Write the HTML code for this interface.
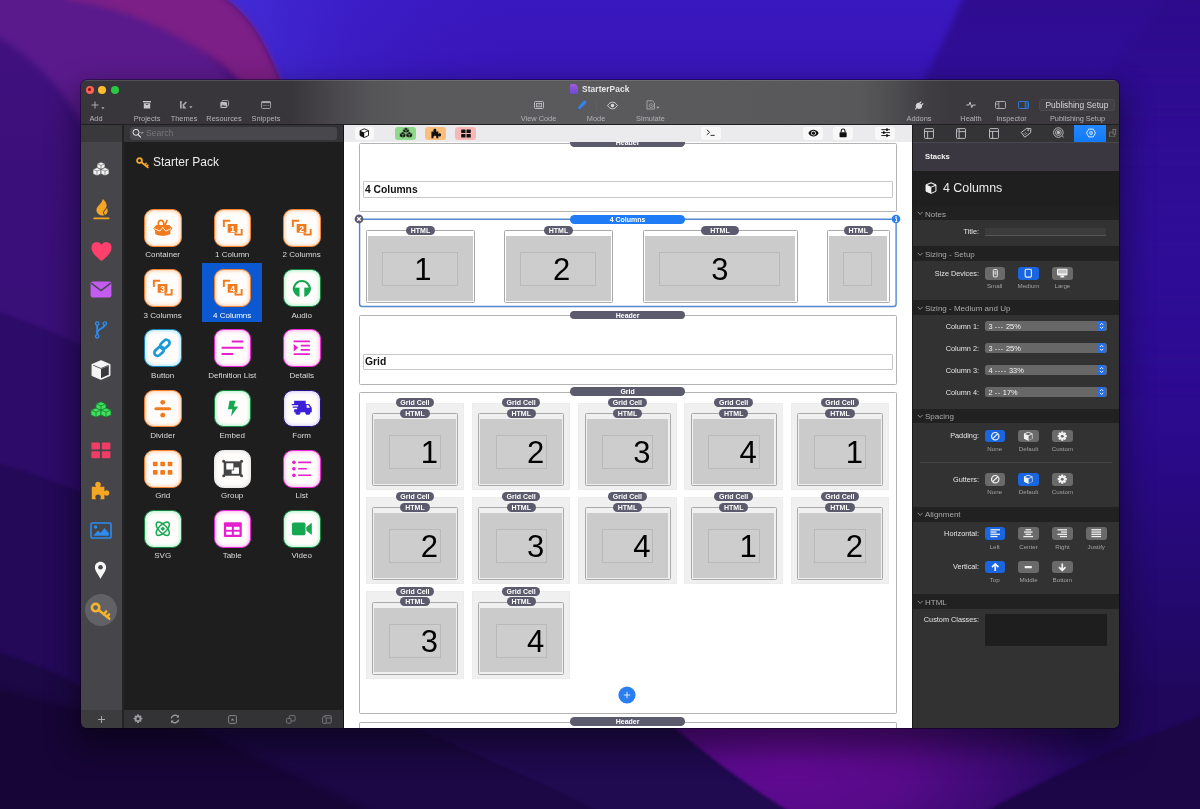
<!DOCTYPE html>
<html lang="en">
<head>
<meta charset="utf-8">
<title>StarterPack</title>
<style>
*{box-sizing:border-box;margin:0;padding:0}
html,body{width:1200px;height:809px;overflow:hidden;background:#2a0a80;font-family:"Liberation Sans",sans-serif;}
#bg{position:absolute;left:0;top:0;width:1200px;height:809px;overflow:hidden}
#shadow{position:absolute;left:81px;top:80px;width:1038px;height:648px;border-radius:6px;box-shadow:0 14px 30px 6px rgba(0,0,0,.42),0 0 0 1px rgba(10,0,30,.45)}
#win{position:absolute;left:81px;top:80px;width:1038px;height:648px;border-radius:6px;overflow:hidden;background:#2d2d2d}
#w{position:absolute;left:-81px;top:-80px;width:1200px;height:809px;will-change:transform}
#w div,#w span,#w svg{position:absolute}
#tb{left:81px;top:80px;width:1038px;height:44px;background:linear-gradient(90deg,#38363a 0px,#38363a 210px,#48464a 250px,#555457 290px,#5a595c 330px,#5a595c 640px,#58575a 780px,#4c4b4e 815px,#403e42 845px,#3b393d 870px,#3b393d 1038px);box-shadow:inset 0 1px 0 rgba(255,255,255,.13)}
#tbline{left:81px;top:124px;width:1038px;height:1px;background:#1f1e21}
.tl{top:85.500px;width:8.100px;height:8.100px;border-radius:50%}
.tlab{top:114px;font-size:7.4px;line-height:9px;color:#b4b3b7;white-space:nowrap;transform:translateX(-50%)}
.ttl{left:582px;top:84px;font-size:8.350px;line-height:11px;font-weight:bold;color:#e6e5e8;letter-spacing:.1px;white-space:nowrap}
</style>
</head>
<body>
<div id="bg">
<svg width="1200" height="809" viewBox="0 0 1200 809">
<defs>
<linearGradient id="gbase" x1="0" y1="0" x2="0" y2="1"><stop offset="0" stop-color="#3a18c0"/><stop offset=".12" stop-color="#3714b4"/><stop offset=".3" stop-color="#3210a2"/><stop offset=".55" stop-color="#2b0a8a"/><stop offset=".78" stop-color="#220868"/><stop offset="1" stop-color="#1c0648"/></linearGradient>
<linearGradient id="gedge" x1="225" y1="0" x2="520" y2="0" gradientUnits="userSpaceOnUse"><stop offset="0" stop-color="#4634de" stop-opacity=".75"/><stop offset=".4" stop-color="#4028d4" stop-opacity=".4"/><stop offset="1" stop-color="#3a18c0" stop-opacity="0"/></linearGradient>
<linearGradient id="gleft" x1="0" y1="0" x2="0" y2="1"><stop offset="0" stop-color="#431280"/><stop offset=".2" stop-color="#3b0f7a"/><stop offset=".4" stop-color="#390f78"/><stop offset="1" stop-color="#2a0b60"/></linearGradient>
<radialGradient id="gglow" cx="790" cy="765" r="300" gradientUnits="userSpaceOnUse" gradientTransform="translate(790 765) scale(1 .5) translate(-790 -765)"><stop offset="0" stop-color="#610a92"/><stop offset=".4" stop-color="#560a88"/><stop offset=".72" stop-color="#3a0a72"/><stop offset="1" stop-color="#20075c"/></radialGradient>
<linearGradient id="gright" x1="0" y1="0" x2="0" y2="400" gradientUnits="userSpaceOnUse"><stop offset="0" stop-color="#2c0a84" stop-opacity=".8"/><stop offset="1" stop-color="#2c0a88" stop-opacity="0"/></linearGradient>
<filter id="b6" color-interpolation-filters="sRGB" x="-20%" y="-20%" width="140%" height="140%"><feGaussianBlur stdDeviation="3"/></filter>
<filter id="b2" color-interpolation-filters="sRGB" x="-20%" y="-20%" width="140%" height="140%"><feGaussianBlur stdDeviation="1.500"/></filter>
<filter id="b20" color-interpolation-filters="sRGB" x="-20%" y="-20%" width="140%" height="140%"><feGaussianBlur stdDeviation="14"/></filter>
</defs>
<rect width="1200" height="809" fill="url(#gbase)"/>
<rect x="220" y="0" width="320" height="200" fill="url(#gedge)"/>
<!-- right darker facets -->
<path d="M975 -40 L962 0 C945 40 930 70 905 110 L900 400 L1260 400 L1260 -40 Z" fill="url(#gright)" filter="url(#b6)"/>
<path d="M1195 -40 L1165 0 C1130 40 1105 75 1085 120 L1080 400 L1260 400 L1260 -40 Z" fill="url(#gright)" opacity=".5" filter="url(#b6)"/>


<!-- left dark purple field -->
<path d="M0 0 L227 0 C255 20 268 50 281 82 L340 250 L690 728 L800 815 L0 815 Z" fill="url(#gleft)"/>
<!-- medium purple -->
<path d="M-40 -40 L60 -40 L120 0 C180 20 230 50 300 200 L110 200 C95 130 60 75 0 38 L-40 15 Z" fill="#5a1a8c" filter="url(#b6)"/>
<!-- magenta band -->
<path d="M-20 -40 L185 -40 L227 0 C255 20 268 50 281 82 L330 200 L300 200 C290 140 250 80 200 50 C160 25 120 8 70 0 Z" fill="#7c1f86" filter="url(#b6)"/>
<!-- left facets -->
<path d="M-20 307 L0 313 C30 322 60 335 95 352 L300 520 L300 840 L-20 840 Z" fill="#2d0b68" filter="url(#b2)"/>
<path d="M-20 459 L0 464 C30 472 60 484 95 498 L400 640 L400 840 L-20 840 Z" fill="#230958" filter="url(#b2)"/>
<path d="M-20 647 L0 653 C30 662 55 673 85 688 C120 705 160 718 193 727 L420 727 L670 840 L-20 840 Z" fill="#1b0844" filter="url(#b2)"/>
<path d="M-20 685 L0 690 C60 705 130 720 193 727 C260 760 320 785 373 815 L420 840 L-20 840 Z" fill="#160536" filter="url(#b6)"/>
<path d="M413 727 L680 727 C715 765 760 790 800 815 L840 840 L660 840 L605 815 C540 780 470 750 413 727 Z" fill="#200a50" filter="url(#b2)"/>
<!-- bottom purple glow -->
<path d="M660 715 C700 750 745 785 795 815 L840 840 L960 840 L1000 815 C1060 780 1130 745 1200 718 L1200 690 L1119 690 L1119 700 Z" fill="url(#gglow)" filter="url(#b2)"/>
<path d="M1230 706 L1200 716 C1130 742 1050 775 985 812 L940 840 L1230 840 Z" fill="#1d0648" filter="url(#b2)"/>
</svg>

</div>
<div id="shadow"></div>
<div id="win"><div id="w">
<div id="tb"></div>
<div id="tbline"></div>
<div class="tl" style="left:85.700px;background:#fe5f57"><div style="left:2.800px;top:2.800px;width:2.500px;height:2.500px;border-radius:50%;background:#8c1a10"></div></div>
<div class="tl" style="left:98px;background:#febc2e"></div>
<div class="tl" style="left:111px;background:#28c840"></div>
<!-- title -->
<svg style="left:570px;top:84px" width="8" height="10" viewBox="0 0 8 10"><defs><linearGradient id="gdoc" x1="0" y1="0" x2="0" y2="1"><stop offset="0" stop-color="#a05ad8"/><stop offset="1" stop-color="#6a4ad0"/></linearGradient></defs><path d="M1 0h4.5L8 2.5V9a1 1 0 0 1-1 1H1a1 1 0 0 1-1-1V1a1 1 0 0 1 1-1z" fill="url(#gdoc)"/></svg>
<div class="ttl">StarterPack</div>
<!-- left group -->
<svg style="left:91px;top:101px" width="16" height="10" viewBox="0 0 16 10"><path d="M4 .5v7M.5 4h7" stroke="#aaa9ad" stroke-width="1" fill="none"/><path d="M10.3 6.200h3.200l-1.600 2.100z" fill="#b4b3b7"/></svg>
<div class="tlab" style="left:96px">Add</div>
<svg style="left:143px;top:101px" width="8" height="8" viewBox="0 0 8 8"><rect x="0" y="0" width="8" height="1.4" fill="#c9c8cc"/><path d="M.8 2.2h6.4V7.4H.8z M2.8 3.2v.8h2.4v-.8z" fill="#c9c8cc" fill-rule="evenodd"/></svg>
<div class="tlab" style="left:147px">Projects</div>
<svg style="left:180px;top:101px" width="13" height="8" viewBox="0 0 13 8"><path d="M0 0h1.7v7.4H0z M2.6 7.4V3.6L5.8.4 6.9 1.5 4 4.6 6.6 7.4z" fill="#a9a8ac"/><path d="M9.300 5.200h3.200l-1.600 2.100z" fill="#b4b3b7"/></svg>
<div class="tlab" style="left:184px">Themes</div>
<svg style="left:220px;top:100px" width="9" height="9" viewBox="0 0 9 9"><rect x="2" y=".5" width="6.5" height="5.5" rx="1" fill="none" stroke="#a9a8ac" stroke-width=".9"/><rect x=".3" y="2" width="6.7" height="6" rx="1" fill="#bdbcc0"/><path d="M1 7l1.8-2.4 1.3 1.5 1-1L6.4 7z" fill="#4a494d"/></svg>
<div class="tlab" style="left:224px">Resources</div>
<svg style="left:261px;top:101px" width="10" height="8" viewBox="0 0 10 8"><rect x=".5" y=".5" width="9" height="7" rx="1" fill="none" stroke="#a9a8ac" stroke-width=".9"/><rect x=".5" y=".5" width="9" height="1.6" fill="#a9a8ac"/><path d="M2 4.4h3.5M6.3 4.4h1.6" stroke="#8a898d" stroke-width=".8"/></svg>
<div class="tlab" style="left:266px">Snippets</div>
<!-- centre group -->
<svg style="left:534px;top:101px" width="10" height="8" viewBox="0 0 10 8"><rect x=".5" y=".5" width="9" height="7" rx="1" fill="none" stroke="#c4c3c7" stroke-width=".9"/><rect x="2.4" y="2.4" width="5.2" height="3.4" fill="none" stroke="#c4c3c7" stroke-width=".8"/><path d="M4.6 3.3l-.8.8.8.8M5.4 3.3l.8.8-.8.8" stroke="#c4c3c7" stroke-width=".5" fill="none"/></svg>
<div class="tlab" style="left:538.5px">View Code</div>
<svg style="left:576px;top:100px" width="11" height="11" viewBox="0 0 11 11"><path d="M7.6 1.1a1.5 1.5 0 0 1 2.2 2.2L4.4 8.7 1.6 9.6l.9-2.8z" fill="#2f86f6"/><path d="M1.2 10l.7-2 1.3 1.3z" fill="#1d4f96"/></svg>
<div style="left:596px;top:100px;width:1px;height:11px;background:#605f63"></div>
<svg style="left:607px;top:101px" width="11" height="9" viewBox="0 0 11 9"><path d="M.6 4.5C2 2.3 3.6 1.2 5.5 1.2s3.500 1.100 4.900 3.300C9 6.700 7.400 7.800 5.500 7.800S2 6.700.600 4.500z" fill="none" stroke="#dcdbdf" stroke-width=".9"/><circle cx="5.500" cy="4.500" r="1.700" fill="#dcdbdf"/></svg>
<div class="tlab" style="left:596px">Mode</div>
<svg style="left:646px;top:100px" width="14" height="10" viewBox="0 0 14 10"><path d="M1 .8h5.200L8.500 3v6H1z" fill="none" stroke="#aaa9ad" stroke-width=".9"/><circle cx="5.300" cy="5.600" r="2" fill="none" stroke="#aaa9ad" stroke-width=".8"/><circle cx="5.300" cy="5.600" r=".7" fill="#aaa9ad"/><path d="M10.300 6.700h3.200l-1.600 2.100z" fill="#b4b3b7"/></svg>
<div class="tlab" style="left:650.5px">Simulate</div>
<!-- right group -->
<svg style="left:914px;top:101px" width="10" height="9" viewBox="0 0 10 9"><path d="M5.200 1.800L7 .2l.7.700-1.500 1.700 1 1 1.700-1.500.7.700-1.600 1.800c.300 1.300-.200 2.300-1.200 2.900-1.200.700-2.700.500-3.700-.200L1.500 8.800.8 8.100l1.400-1.500C1.500 5.500 1.500 4 2.300 2.900c.700-.900 1.800-1.300 2.900-1.100z" fill="#d4d3d7"/></svg>
<div class="tlab" style="left:919px">Addons</div>
<svg style="left:966px;top:101px" width="10" height="8" viewBox="0 0 10 8"><path d="M.3 4h2.500l1.300-2.800L5.800 6.500 6.900 4h2.800" fill="none" stroke="#d0cfd3" stroke-width=".9" stroke-linejoin="round"/></svg>
<div class="tlab" style="left:971px">Health</div>
<svg style="left:995px;top:101px" width="11" height="8" viewBox="0 0 11 8"><rect x=".5" y=".5" width="10" height="7" rx="1" fill="none" stroke="#b9b8bc" stroke-width=".9"/><path d="M3.800.5v7" stroke="#b9b8bc" stroke-width=".8"/><path d="M1.400 2.200h1.400M1.400 3.500h1.400" stroke="#b9b8bc" stroke-width=".6"/></svg>
<svg style="left:1017.500px;top:101px" width="11" height="8" viewBox="0 0 11 8"><rect x=".5" y=".5" width="10" height="7" rx="1" fill="none" stroke="#2f7fe8" stroke-width=".9"/><rect x="7.200" y=".5" width="3.300" height="7" fill="#2f7fe8" opacity=".35"/><path d="M7.200.5v7" stroke="#2f7fe8" stroke-width=".8"/></svg>
<div class="tlab" style="left:1011.500px">Inspector</div>
<div style="left:1039px;top:98.500px;width:75.500px;height:12.500px;border-radius:3.500px;background:rgba(255,255,255,.04);border:.5px solid rgba(255,255,255,.05)"></div>
<div style="left:1045.500px;top:99px;font-size:8.400px;line-height:12px;color:#d6d5d9;white-space:nowrap">Publishing Setup</div>
<div class="tlab" style="left:1077.500px;font-size:7.350px">Publishing Setup</div>

<!-- icon sidebar -->
<div style="left:81px;top:125px;width:41px;height:17px;background:#39383b"></div>
<div style="left:81px;top:142px;width:41px;height:568px;background:#464549"></div>
<div style="left:81px;top:710px;width:41px;height:18px;background:#3c3b3e"></div>
<div style="left:122px;top:125px;width:1.500px;height:603px;background:#232225"></div>
<!-- cubes white -->
<svg style="left:92px;top:161px" width="18" height="16" viewBox="0 0 18 16"><g fill="#f2f2f2" stroke="#464549" stroke-width=".7" stroke-linejoin="round"><path d="M9 1l4 1.800v4.200L9 8.800 5 7V2.800z"/><path d="M5 6.500l4 1.800v4.700L5 14.800 1 13V8.300z"/><path d="M13 6.500l4 1.800v4.700l-4 1.800-4-1.800V8.300z"/></g><g fill="none" stroke="#5a595d" stroke-width=".6"><path d="M5 2.800l4 1.700 4-1.700M9 4.500v4"/><path d="M1 8.300l4 1.700 4-1.700M5 10v4.500"/><path d="M9 8.300l4 1.700 4-1.700M13 10v4.500"/></g></svg>
<!-- flame -->
<svg style="left:93px;top:198px" width="17" height="22" viewBox="0 0 17 22"><path d="M9.600 1c1.800 1.300 3.800 3.400 4 6.100.2 2-.8 3.400-2 4.600-1 1-1.700 2-1.500 3.400.1.900.6 1.600 1.300 2.100-3.200.9-7.200-.5-7.900-4.200-.5-2.900 1.300-4.700 3.100-6.600C8 4.900 9.500 3.400 9.600 1z" fill="#f5a623"/><path d="M12 17.100c1.700-.8 2.900-2.500 2.700-4.800-.1-1-.5-1.800-1-2.500-.2 1.300-1 2.100-1.900 3-.9 1-1.300 2.600.2 4.300z" fill="#f5a623"/><path d="M9.300 17.300c-1.700-.6-2.500-2-2.200-3.500.3-1.600 1.700-2.300 2.700-3.500.5 1.500 2 2.200 1.700 4.100-.2 1.300-1 2.300-2.200 2.900z" fill="#464549" opacity=".0"/><rect x=".3" y="19.600" width="16.200" height="1.600" rx=".7" fill="#f5a623"/></svg>
<!-- heart -->
<svg style="left:90.500px;top:240.500px" width="21" height="21" viewBox="0 0 22 22"><path d="M11 21C4 15.500.5 11.500.5 7A5.700 5.700 0 0 1 11 3.800 5.700 5.700 0 0 1 21.500 7c0 4.500-3.500 8.500-10.500 14z" fill="#ff3f6c"/></svg>
<!-- envelope -->
<svg style="left:90px;top:281px" width="22" height="17" viewBox="0 0 22 17"><rect x=".6" y=".6" width="20.800" height="15.800" rx="2" fill="#c55cf2"/><path d="M1.200 2.200L11 9.600l9.800-7.400" fill="none" stroke="#464549" stroke-width="1.500"/></svg>
<!-- fork -->
<svg style="left:94px;top:321px" width="14" height="18" viewBox="0 0 14 18"><g fill="none" stroke="#2d8cf0" stroke-width="1.900" stroke-linecap="round"><path d="M3.200 3.500v11"/><path d="M10.800 3.500c0 4.500-7.600 3.500-7.600 8.500"/></g><g fill="#464549" stroke="#2d8cf0" stroke-width="1.400"><circle cx="3.200" cy="2.600" r="1.700"/><circle cx="10.800" cy="2.600" r="1.700"/><circle cx="3.200" cy="15.300" r="1.700"/></g></svg>
<!-- cube -->
<svg style="left:91px;top:360px" width="20" height="20" viewBox="0 0 20 20"><path d="M10 .8l8.800 3.700v10.800L10 19.200 1.200 15.300V4.500z" fill="#f4f4f4"/><path d="M10 9v9.200l7.800-3.500V5.700z" fill="#3a393c"/><path d="M2.200 5.200L10 8.500l7.800-3.300" fill="none" stroke="#3a393c" stroke-width=".8"/><path d="M3.300 5.200L10 8l6.700-2.800L10 2.600z" fill="#f4f4f4" opacity="0"/><path d="M10 .8l8.800 3.700v10.800L10 19.200 1.200 15.300V4.500z" fill="none" stroke="#f4f4f4" stroke-width="1.300" stroke-linejoin="round"/></svg>
<!-- green cubes -->
<svg style="left:90px;top:401px" width="22" height="18" viewBox="0 0 22 18"><g fill="#3ee05c" stroke="#1c7a30" stroke-width=".8" stroke-linejoin="round"><path d="M11 .8l5 2.100v4.900l-5 2.100-5-2.100V2.900z"/><path d="M6 7l5 2.100V14l-5 2.100L1 14V9.100z"/><path d="M16 7l5 2.100V14l-5 2.100-5-2.100V9.100z"/></g><g fill="none" stroke="#1c7a30" stroke-width=".8"><path d="M6 2.900l5 2 5-2M11 4.900v4.500"/><path d="M1 9.100l5 2 5-2M6 11.100v4.800"/><path d="M11 9.100l5 2 5-2M16 11.100v4.800"/></g></svg>
<!-- red grid -->
<svg style="left:91px;top:442px" width="20" height="17" viewBox="0 0 20 17"><g fill="#f03c66"><rect x=".4" y=".6" width="8.600" height="7" rx="1"/><rect x="10.800" y=".6" width="8.600" height="7" rx="1"/><rect x=".4" y="9.200" width="8.600" height="7" rx="1"/><rect x="10.800" y="9.200" width="8.600" height="7" rx="1"/></g></svg>
<!-- puzzle -->
<svg style="left:91px;top:481px" width="20" height="19" viewBox="0 0 20 19"><path d="M.8 5.800h4.400c-.7-.8-1-1.500-1-2.300C4.200 2 5.400.8 7 .8s2.800 1.200 2.800 2.700c0 .8-.3 1.500-1 2.300h4.600v4.400c.8-.7 1.500-1 2.300-1 1.500 0 2.700 1.200 2.700 2.800s-1.200 2.800-2.700 2.800c-.8 0-1.500-.3-2.300-1v4.500H9c.6-.7.900-1.400.9-2.100 0-1.400-1.200-2.600-2.800-2.600s-2.800 1.200-2.800 2.600c0 .7.300 1.400.9 2.100H.8z" fill="#f5a623"/></svg>
<!-- image -->
<svg style="left:90px;top:522px" width="22" height="17" viewBox="0 0 22 17"><rect x="1" y="1" width="20" height="15" rx="1.300" fill="none" stroke="#2d8cf0" stroke-width="1.600"/><circle cx="5.600" cy="5" r="1.700" fill="#2d8cf0"/><path d="M3.300 13.700l4.700-5.200 2.600 2.600L14.400 6l4.400 5v2.700z" fill="#2d8cf0"/></svg>
<!-- pin -->
<svg style="left:94px;top:561px" width="13" height="19" viewBox="0 0 13 19"><path d="M6.500.8c3.100 0 5.600 2.400 5.600 5.500 0 3.700-3.400 7.200-5.600 11.700C4.300 13.500.9 10 .9 6.300.9 3.200 3.400.8 6.500.8z" fill="#f6f6f6"/><circle cx="6.500" cy="6.200" r="2.300" fill="#464549"/></svg>
<!-- key selected -->
<div style="left:85px;top:594px;width:32px;height:32px;border-radius:50%;background:#626166"></div>
<svg style="left:90px;top:602px" width="22" height="19" viewBox="0 0 22 19"><g fill="none" stroke="#f5b22c" stroke-width="2.600" stroke-linecap="round" stroke-linejoin="round"><circle cx="5.600" cy="5.600" r="3.700"/><path d="M8.600 8l10.600 8.600M13.800 12.400l2.400-2.900M17 15l2-2.500"/></g></svg>
<!-- bottom plus -->
<svg style="left:97px;top:715px" width="9" height="9" viewBox="0 0 9 9"><path d="M4.500 1v7M1 4.500h7" stroke="#b5b4b8" stroke-width=".9"/></svg>

<!-- library panel -->
<div style="left:123.500px;top:125px;width:219.500px;height:17px;background:#343336"></div>
<div style="left:123.500px;top:142px;width:219.500px;height:568px;background:#1e1e1e"></div>
<div style="left:123.500px;top:710px;width:219.500px;height:18px;background:#333235"></div>
<div style="left:343px;top:125px;width:1px;height:603px;background:#151515"></div>
<div style="left:129.500px;top:127px;width:207px;height:12.500px;border-radius:3px;background:#48474b"></div>
<svg style="left:132px;top:128px" width="12" height="11" viewBox="0 0 12 11"><circle cx="4" cy="4.300" r="3" fill="none" stroke="#e8e8ea" stroke-width="1"/><path d="M6.200 6.600l2.300 2.600" stroke="#e8e8ea" stroke-width="1.100" stroke-linecap="round"/><path d="M8.600 4.200l1.200 1.200L11 4.200" fill="none" stroke="#e8e8ea" stroke-width=".8"/></svg>
<div style="left:146px;top:127.700px;font-size:8.600px;line-height:11px;color:#77767b;white-space:nowrap">Search</div>
<svg style="left:135.500px;top:157px" width="13" height="12" viewBox="0 0 13 12"><g fill="none" stroke="#f5a623" stroke-width="1.800" stroke-linecap="round" stroke-linejoin="round"><circle cx="3.500" cy="3.600" r="2.400"/><path d="M5.400 5.200l6.400 5.200M8.800 8l1.200-1.500M10.600 9.500l1-1.200"/></g></svg>
<div style="left:153px;top:154.500px;font-size:12px;line-height:15px;color:#ececec;white-space:nowrap">Starter Pack</div>
<div style="left:202.300px;top:262.500px;width:59.500px;height:59.500px;background:#0b58d0"></div>
<div style="left:144px;top:209px;width:37.500px;height:37.500px;border-radius:9.500px;background:#fffdfb;border:1.500px solid #f28233;box-shadow:inset 0 0 3.500px 1px rgba(255,170,100,.55)"></div>
<svg style="left:144px;top:209px" width="37.500" height="37.500" viewBox="0 0 37 37"><path d="M9.200 19.200l2.800-3.400h13l3.100 3.400-2.100 2.200v3.200c-2 1.200-4.500 1.800-7.500 1.800s-5.500-.6-7.500-1.800v-3.200z" fill="#f07a1c"/><path d="M10.300 19.400l5.200 2.400 3-3.600 3 3.600 5.200-2.400" fill="none" stroke="#fff" stroke-width=".9"/><path d="M14.200 15.600c-.5-3 1-4.600 2.800-4.400 1.600.2 2.500 1.700 2.600 4.200M22.600 11.300l-1.700 4.300" fill="none" stroke="#f07a1c" stroke-width="1.700" stroke-linecap="round"/></svg>
<div style="left:162.7px;top:250.2px;font-size:8px;line-height:10px;color:#dcdcdc;white-space:nowrap;transform:translateX(-50%)">Container</div>
<div style="left:213.5px;top:209px;width:37.500px;height:37.500px;border-radius:9.500px;background:#fffdfb;border:1.500px solid #f28233;box-shadow:inset 0 0 3.500px 1px rgba(255,170,100,.55)"></div>
<svg style="left:213.5px;top:209px" width="37.500" height="37.500" viewBox="0 0 37 37"><g fill="none" stroke="#f07a1c" stroke-width="1.900"><path d="M9.700 17.800V11.600H16"/><path d="M27.300 19.800V25.300H21.200V23.600"/></g><rect x="13.500" y="14.800" width="9.600" height="8.600" fill="#f07a1c"/><text x="18.300" y="22.300" font-family="Liberation Sans, sans-serif" font-weight="bold" font-size="8.500" fill="#fff" text-anchor="middle">1</text></svg>
<div style="left:232.2px;top:250.2px;font-size:8px;line-height:10px;color:#dcdcdc;white-space:nowrap;transform:translateX(-50%)">1 Column</div>
<div style="left:283px;top:209px;width:37.500px;height:37.500px;border-radius:9.500px;background:#fffdfb;border:1.500px solid #f28233;box-shadow:inset 0 0 3.500px 1px rgba(255,170,100,.55)"></div>
<svg style="left:283px;top:209px" width="37.500" height="37.500" viewBox="0 0 37 37"><g fill="none" stroke="#f07a1c" stroke-width="1.900"><path d="M9.700 17.800V11.600H16"/><path d="M27.300 19.800V25.300H21.200V23.600"/></g><rect x="13.500" y="14.800" width="9.600" height="8.600" fill="#f07a1c"/><text x="18.300" y="22.300" font-family="Liberation Sans, sans-serif" font-weight="bold" font-size="8.500" fill="#fff" text-anchor="middle">2</text></svg>
<div style="left:301.7px;top:250.2px;font-size:8px;line-height:10px;color:#dcdcdc;white-space:nowrap;transform:translateX(-50%)">2 Columns</div>
<div style="left:144px;top:269px;width:37.500px;height:37.500px;border-radius:9.500px;background:#fffdfb;border:1.500px solid #f28233;box-shadow:inset 0 0 3.500px 1px rgba(255,170,100,.55)"></div>
<svg style="left:144px;top:269px" width="37.500" height="37.500" viewBox="0 0 37 37"><g fill="none" stroke="#f07a1c" stroke-width="1.900"><path d="M9.700 17.800V11.600H16"/><path d="M27.300 19.800V25.300H21.200V23.600"/></g><rect x="13.500" y="14.800" width="9.600" height="8.600" fill="#f07a1c"/><text x="18.300" y="22.300" font-family="Liberation Sans, sans-serif" font-weight="bold" font-size="8.500" fill="#fff" text-anchor="middle">3</text></svg>
<div style="left:162.7px;top:310.5px;font-size:8px;line-height:10px;color:#dcdcdc;white-space:nowrap;transform:translateX(-50%)">3 Columns</div>
<div style="left:213.5px;top:269px;width:37.500px;height:37.500px;border-radius:9.500px;background:#fffdfb;border:1.500px solid #f28233;box-shadow:inset 0 0 3.500px 1px rgba(255,170,100,.55)"></div>
<svg style="left:213.5px;top:269px" width="37.500" height="37.500" viewBox="0 0 37 37"><g fill="none" stroke="#f07a1c" stroke-width="1.900"><path d="M9.700 17.800V11.600H16"/><path d="M27.300 19.800V25.300H21.200V23.600"/></g><rect x="13.500" y="14.800" width="9.600" height="8.600" fill="#f07a1c"/><text x="18.300" y="22.300" font-family="Liberation Sans, sans-serif" font-weight="bold" font-size="8.500" fill="#fff" text-anchor="middle">4</text></svg>
<div style="left:232.2px;top:310.5px;font-size:8px;line-height:10px;color:#ffffff;white-space:nowrap;transform:translateX(-50%)">4 Columns</div>
<div style="left:283px;top:269px;width:37.500px;height:37.500px;border-radius:9.500px;background:#fffdfb;border:1.500px solid #14843f;box-shadow:inset 0 0 3.500px 1px rgba(110,235,165,.55)"></div>
<svg style="left:283px;top:269px" width="37.500" height="37.500" viewBox="0 0 37 37"><defs><clipPath id="cpa"><rect x="9" y="18.300" width="7.300" height="9"/><rect x="21" y="18.300" width="7.500" height="9"/></clipPath></defs><circle cx="18.600" cy="19.200" r="8.900" fill="#15a851" clip-path="url(#cpa)"/><path d="M10.800 21a7.900 7.900 0 1 1 15.600 0" fill="none" stroke="#15a851" stroke-width="2.100"/></svg>
<div style="left:301.7px;top:310.5px;font-size:8px;line-height:10px;color:#dcdcdc;white-space:nowrap;transform:translateX(-50%)">Audio</div>
<div style="left:144px;top:329.2px;width:37.500px;height:37.500px;border-radius:9.500px;background:#fffdfb;border:1.500px solid #1a7fb4;box-shadow:inset 0 0 3.500px 1px rgba(110,215,255,.6)"></div>
<svg style="left:144px;top:329.2px" width="37.500" height="37.500" viewBox="0 0 37 37"><g fill="none" stroke="#1c9ad8" stroke-width="2.700" stroke-linecap="round"><rect x="9.700" y="18.900" width="10.400" height="6.200" rx="3.100" transform="rotate(-42 14.900 22)"/><rect x="15.400" y="12" width="10.400" height="6.200" rx="3.100" transform="rotate(-42 20.600 15.100)"/></g></svg>
<div style="left:162.7px;top:370.9px;font-size:8px;line-height:10px;color:#dcdcdc;white-space:nowrap;transform:translateX(-50%)">Button</div>
<div style="left:213.5px;top:329.2px;width:37.500px;height:37.500px;border-radius:9.500px;background:#fffdfb;border:1.500px solid #e62ad2;box-shadow:inset 0 0 3.500px 1px rgba(255,110,240,.5)"></div>
<svg style="left:213.5px;top:329.2px" width="37.500" height="37.500" viewBox="0 0 37 37"><g stroke="#e420cf" stroke-width="2.100"><path d="M17.500 12.300h11.500M7.500 18.500h21.500M7.500 24.700h11.500"/></g></svg>
<div style="left:232.2px;top:370.9px;font-size:8px;line-height:10px;color:#dcdcdc;white-space:nowrap;transform:translateX(-50%)">Definition List</div>
<div style="left:283px;top:329.2px;width:37.500px;height:37.500px;border-radius:9.500px;background:#fffdfb;border:1.500px solid #e62ad2;box-shadow:inset 0 0 3.500px 1px rgba(255,110,240,.5)"></div>
<svg style="left:283px;top:329.2px" width="37.500" height="37.500" viewBox="0 0 37 37"><g stroke="#e420cf" stroke-width="1.900"><path d="M10.500 12.200h16M17.500 16.400h9M17.500 20.600h9M10.500 24.800h16"/></g><path d="M10.600 14.800l4.400 3.700-4.400 3.700z" fill="#e420cf"/></svg>
<div style="left:301.7px;top:370.9px;font-size:8px;line-height:10px;color:#dcdcdc;white-space:nowrap;transform:translateX(-50%)">Details</div>
<div style="left:144px;top:389.5px;width:37.500px;height:37.500px;border-radius:9.500px;background:#fffdfb;border:1.500px solid #f28233;box-shadow:inset 0 0 3.500px 1px rgba(255,170,100,.55)"></div>
<svg style="left:144px;top:389.5px" width="37.500" height="37.500" viewBox="0 0 37 37"><rect x="10.300" y="16.900" width="16.400" height="3.100" rx="1.500" fill="#f07a1c"/><circle cx="18.500" cy="12.200" r="2.400" fill="#f07a1c"/><circle cx="18.500" cy="24.800" r="2.400" fill="#f07a1c"/></svg>
<div style="left:162.7px;top:431px;font-size:8px;line-height:10px;color:#dcdcdc;white-space:nowrap;transform:translateX(-50%)">Divider</div>
<div style="left:213.5px;top:389.5px;width:37.500px;height:37.500px;border-radius:9.500px;background:#fffdfb;border:1.500px solid #14843f;box-shadow:inset 0 0 3.500px 1px rgba(110,235,165,.55)"></div>
<svg style="left:213.5px;top:389.5px" width="37.500" height="37.500" viewBox="0 0 37 37"><path d="M15.300 10.500h6l-1.700 5.700h4.200l-7 10 1.300-7.200h-4.300z" fill="#15a851"/></svg>
<div style="left:232.2px;top:431px;font-size:8px;line-height:10px;color:#dcdcdc;white-space:nowrap;transform:translateX(-50%)">Embed</div>
<div style="left:283px;top:389.5px;width:37.500px;height:37.500px;border-radius:9.500px;background:#fffdfb;border:1.500px solid #24127a;box-shadow:inset 0 0 3.500px 1px rgba(130,110,255,.35)"></div>
<svg style="left:283px;top:389.5px" width="37.500" height="37.500" viewBox="0 0 37 37"><g fill="#3b20d8"><path d="M11 10.700h11.400v3h3.400l2.600 3.800v4.400h-1.300a2.600 2.600 0 0 1-5.200 0h-4.600a2.600 2.600 0 0 1-5.200 0H11v-3h3v-1.300H9.600v-1.300H15v-1.300H8.600v-1.300H11z M23.300 14.900v2.700h3.400l-1.700-2.700z"/><circle cx="14.700" cy="22" r="1.700"/><circle cx="24.500" cy="22" r="1.700"/></g></svg>
<div style="left:301.7px;top:431px;font-size:8px;line-height:10px;color:#dcdcdc;white-space:nowrap;transform:translateX(-50%)">Form</div>
<div style="left:144px;top:450px;width:37.500px;height:37.500px;border-radius:9.500px;background:#fffdfb;border:1.500px solid #f28233;box-shadow:inset 0 0 3.500px 1px rgba(255,170,100,.55)"></div>
<svg style="left:144px;top:450px" width="37.500" height="37.500" viewBox="0 0 37 37"><g fill="#f07a1c"><rect x="8.8" y="11.5" width="4.600" height="4.600" rx=".8"/><rect x="16.1" y="11.5" width="4.600" height="4.600" rx=".8"/><rect x="23.4" y="11.5" width="4.600" height="4.600" rx=".8"/><rect x="8.8" y="19.8" width="4.600" height="4.600" rx=".8"/><rect x="16.1" y="19.8" width="4.600" height="4.600" rx=".8"/><rect x="23.4" y="19.8" width="4.600" height="4.600" rx=".8"/></g></svg>
<div style="left:162.7px;top:491.4px;font-size:8px;line-height:10px;color:#dcdcdc;white-space:nowrap;transform:translateX(-50%)">Grid</div>
<div style="left:213.5px;top:450px;width:37.500px;height:37.500px;border-radius:9.500px;background:#fffdfb;border:1.500px solid #ececec;box-shadow:inset 0 0 3.500px 1px rgba(0,0,0,.08)"></div>
<svg style="left:213.5px;top:450px" width="37.500" height="37.500" viewBox="0 0 37 37"><rect x="9.600" y="11.200" width="17.600" height="14.200" fill="#444"/><g fill="#444"><circle cx="9.600" cy="11.200" r="1.500"/><circle cx="27.200" cy="11.200" r="1.500"/><circle cx="9.600" cy="25.400" r="1.500"/><circle cx="27.200" cy="25.400" r="1.500"/></g><rect x="17.400" y="17.200" width="7.200" height="6.300" fill="#fff"/><rect x="11.300" y="12.300" width="8.600" height="7.800" fill="#444"/><rect x="12.100" y="13.100" width="7" height="6.200" fill="#fff"/></svg>
<div style="left:232.2px;top:491.4px;font-size:8px;line-height:10px;color:#dcdcdc;white-space:nowrap;transform:translateX(-50%)">Group</div>
<div style="left:283px;top:450px;width:37.500px;height:37.500px;border-radius:9.500px;background:#fffdfb;border:1.500px solid #e62ad2;box-shadow:inset 0 0 3.500px 1px rgba(255,110,240,.5)"></div>
<svg style="left:283px;top:450px" width="37.500" height="37.500" viewBox="0 0 37 37"><g fill="#e420cf"><circle cx="10.800" cy="12.200" r="1.800"/><circle cx="10.800" cy="18.600" r="1.800"/><circle cx="10.800" cy="25" r="1.800"/></g><g stroke="#e420cf" stroke-width="1.500"><path d="M15 12.200h13M15 18.600h8.500M15 25h13"/></g></svg>
<div style="left:301.7px;top:491.4px;font-size:8px;line-height:10px;color:#dcdcdc;white-space:nowrap;transform:translateX(-50%)">List</div>
<div style="left:144px;top:510px;width:37.500px;height:37.500px;border-radius:9.500px;background:#fffdfb;border:1.500px solid #14843f;box-shadow:inset 0 0 3.500px 1px rgba(110,235,165,.55)"></div>
<svg style="left:144px;top:510px" width="37.500" height="37.500" viewBox="0 0 37 37"><g fill="none" stroke="#15a851" stroke-width="1.500"><ellipse cx="18.500" cy="18.500" rx="8.400" ry="3.900" transform="rotate(45 18.500 18.500)"/><ellipse cx="18.500" cy="18.500" rx="8.400" ry="3.900" transform="rotate(-45 18.500 18.500)"/></g><path d="M18.500 16.300l2.200 2.200-2.200 2.200-2.200-2.200z" fill="#15a851"/></svg>
<div style="left:162.7px;top:551.4px;font-size:8px;line-height:10px;color:#dcdcdc;white-space:nowrap;transform:translateX(-50%)">SVG</div>
<div style="left:213.5px;top:510px;width:37.500px;height:37.500px;border-radius:9.500px;background:#fffdfb;border:1.500px solid #e62ad2;box-shadow:inset 0 0 3.500px 1px rgba(255,110,240,.5)"></div>
<svg style="left:213.5px;top:510px" width="37.500" height="37.500" viewBox="0 0 37 37"><rect x="9.800" y="12" width="17.600" height="14.600" rx="1" fill="#e420cf"/><g fill="#fff"><rect x="12" y="16.600" width="5.600" height="3"/><rect x="19.600" y="16.600" width="5.600" height="3"/><rect x="12" y="21.400" width="5.600" height="3"/><rect x="19.600" y="21.400" width="5.600" height="3"/></g></svg>
<div style="left:232.2px;top:551.4px;font-size:8px;line-height:10px;color:#dcdcdc;white-space:nowrap;transform:translateX(-50%)">Table</div>
<div style="left:283px;top:510px;width:37.500px;height:37.500px;border-radius:9.500px;background:#fffdfb;border:1.500px solid #14843f;box-shadow:inset 0 0 3.500px 1px rgba(110,235,165,.55)"></div>
<svg style="left:283px;top:510px" width="37.500" height="37.500" viewBox="0 0 37 37"><rect x="8.800" y="12.300" width="13.400" height="12.600" rx="1.800" fill="#15a851"/><path d="M23.400 17l4.600-3.800v10.800l-4.600-3.800z" fill="#15a851" stroke="#15a851" stroke-width=".8" stroke-linejoin="round"/></svg>
<div style="left:301.7px;top:551.4px;font-size:8px;line-height:10px;color:#dcdcdc;white-space:nowrap;transform:translateX(-50%)">Video</div>
<svg style="left:133px;top:714px" width="10" height="10" viewBox="0 0 10 10"><path d="M5 .6l.9.200.3 1.100.9.500 1.100-.4.700.700-.4 1.100.5.900 1.100.3v1l-1.100.3-.5.900.4 1.100-.7.700-1.100-.4-.9.500-.3 1.100H4.100l-.3-1.100-.9-.5-1.100.4-.7-.7.400-1.100-.5-.9L-.1 6v-1l1.100-.3.500-.9-.4-1.100.7-.7 1.100.4.900-.5.300-1.100z" fill="#9c9b9f" transform="translate(.5 -.3) scale(.9)"/><circle cx="5" cy="4.700" r="1.500" fill="#333235"/></svg>
<svg style="left:169.500px;top:714px" width="10" height="10" viewBox="0 0 10 10"><g fill="none" stroke="#a5a4a8" stroke-width="1.300"><path d="M1.300 4.300A3.800 3.800 0 0 1 8 2.600"/><path d="M8.700 5.700A3.800 3.800 0 0 1 2 7.400"/></g><path d="M8.900.8v2.600H6.300zM1.100 9.200V6.600h2.600z" fill="#a5a4a8"/></svg>
<svg style="left:228px;top:714.500px" width="9" height="9" viewBox="0 0 9 9"><rect x=".6" y=".6" width="7.800" height="7.800" rx="1.200" fill="none" stroke="#8e8d91" stroke-width=".9"/><path d="M2.600 5.600l1.900-2.400 1.900 2.400z" fill="#8e8d91"/></svg>
<svg style="left:286px;top:714.500px" width="10" height="9" viewBox="0 0 10 9"><rect x="3.300" y=".6" width="5.800" height="5.400" rx=".8" fill="none" stroke="#7d7c80" stroke-width=".9"/><rect x=".6" y="3.400" width="4.400" height="4.800" rx=".8" fill="#333235" stroke="#7d7c80" stroke-width=".9"/></svg>
<svg style="left:322px;top:714.500px" width="10" height="9" viewBox="0 0 10 9"><rect x="2" y=".6" width="7.200" height="7.400" rx=".8" fill="none" stroke="#7d7c80" stroke-width=".9"/><rect x=".6" y="1.800" width="3.600" height="6.600" rx=".8" fill="#333235" stroke="#7d7c80" stroke-width=".9"/><path d="M4.200 3h5" stroke="#7d7c80" stroke-width=".8"/></svg>
<!-- canvas -->
<div style="left:344px;top:125px;width:568px;height:603px;background:#fff"></div>
<div style="left:359px;top:142.5px;width:537.5px;height:69px;border:1px solid #b3b3b3;border-radius:1.5px;"></div>
<div style="left:569.85px;top:138px;width:115.5px;height:8.6px;border-radius:4.3px;background:#5b5b6d;color:#fff;font-size:7px;line-height:9px;font-weight:bold;text-align:center;white-space:nowrap;">Header</div>
<div style="left:363px;top:181px;width:529.5px;height:16.5px;border:1px solid #c8c8c8;border-radius:1px;"></div>
<div style="left:365px;top:183px;font-size:10.300px;line-height:13px;font-weight:bold;color:#111;white-space:nowrap">4 Columns</div>
<svg style="left:356px;top:216px" width="544" height="94" viewBox="0 0 544 94"><rect x="3.600" y="3.200" width="536.500" height="87.300" rx="2.500" fill="none" stroke="#5589cf" stroke-width="1.400"/></svg>
<div style="left:569.85px;top:214.9px;width:115.5px;height:8.8px;border-radius:4.4px;background:#1f7cf6;color:#fff;font-size:7px;line-height:9.2px;font-weight:bold;text-align:center;white-space:nowrap;">4 Columns</div>
<div style="left:366px;top:230.4px;width:109px;height:73px;border:1px solid #a9a9a9;border-radius:1.5px;"></div>
<div style="left:368px;top:236.2px;width:104.5px;height:64.7px;background:#cbcbcb"></div>
<div style="left:382.3px;top:252.2px;width:75.3px;height:34.2px;border:1px solid #b9b9b9;background:#cdcdcd"></div>
<div style="left:385.3px;top:252.2px;width:75.3px;height:34.2px;font-size:31px;line-height:35.6px;text-align:center;color:#000">1</div>
<div style="left:405.8px;top:225.8px;width:29.4px;height:9px;border-radius:4.5px;background:#5b5b6d;color:#fff;font-size:7px;line-height:9.4px;font-weight:bold;text-align:center;white-space:nowrap;">HTML</div>
<div style="left:504px;top:230.4px;width:109px;height:73px;border:1px solid #a9a9a9;border-radius:1.5px;"></div>
<div style="left:506px;top:236.2px;width:104.5px;height:64.7px;background:#cbcbcb"></div>
<div style="left:520.3px;top:252.2px;width:75.3px;height:34.2px;border:1px solid #b9b9b9;background:#cdcdcd"></div>
<div style="left:523.9px;top:252.2px;width:75.3px;height:34.2px;font-size:31px;line-height:35.6px;text-align:center;color:#000">2</div>
<div style="left:543.8px;top:225.8px;width:29.4px;height:9px;border-radius:4.5px;background:#5b5b6d;color:#fff;font-size:7px;line-height:9.4px;font-weight:bold;text-align:center;white-space:nowrap;">HTML</div>
<div style="left:642.5px;top:230.4px;width:155px;height:73px;border:1px solid #a9a9a9;border-radius:1.5px;"></div>
<div style="left:644.5px;top:236.2px;width:150.5px;height:64.7px;background:#cbcbcb"></div>
<div style="left:658.8px;top:252.2px;width:121.3px;height:34.2px;border:1px solid #b9b9b9;background:#cdcdcd"></div>
<div style="left:659.2px;top:252.2px;width:121.3px;height:34.2px;font-size:31px;line-height:35.6px;text-align:center;color:#000">3</div>
<div style="left:700.625px;top:225.8px;width:38.75px;height:9px;border-radius:4.5px;background:#5b5b6d;color:#fff;font-size:7px;line-height:9.4px;font-weight:bold;text-align:center;white-space:nowrap;">HTML</div>
<div style="left:827px;top:230.4px;width:62.5px;height:73px;border:1px solid #a9a9a9;border-radius:1.5px;"></div>
<div style="left:829px;top:236.2px;width:58px;height:64.7px;background:#cbcbcb"></div>
<div style="left:843.3px;top:252.2px;width:28.8px;height:34.2px;border:1px solid #b9b9b9;background:#cdcdcd"></div>
<div style="left:843.55px;top:225.8px;width:29.4px;height:9px;border-radius:4.5px;background:#5b5b6d;color:#fff;font-size:7px;line-height:9.4px;font-weight:bold;text-align:center;white-space:nowrap;">HTML</div>
<svg style="left:354.400px;top:214.300px" width="10" height="10" viewBox="0 0 10 10"><circle cx="5" cy="5" r="4.400" fill="#5b5b6d"/><path d="M3.300 3.300l3.400 3.400M6.700 3.300L3.300 6.700" stroke="#fff" stroke-width="1.300"/></svg>
<svg style="left:891px;top:214.200px" width="10" height="10" viewBox="0 0 10 10"><circle cx="5" cy="5" r="4.300" fill="#2a7ff0"/><circle cx="5" cy="2.900" r=".8" fill="#fff"/><path d="M4.100 4.400h1.500v3M4 7.500h2.200" stroke="#fff" stroke-width=".9" fill="none"/></svg>
<div style="left:359px;top:314.5px;width:537.5px;height:70px;border:1px solid #b3b3b3;border-radius:1.5px;"></div>
<div style="left:569.85px;top:310.5px;width:115.5px;height:8.6px;border-radius:4.3px;background:#5b5b6d;color:#fff;font-size:7px;line-height:9px;font-weight:bold;text-align:center;white-space:nowrap;">Header</div>
<div style="left:363px;top:353.6px;width:529.5px;height:16.2px;border:1px solid #c8c8c8;border-radius:1px;"></div>
<div style="left:365px;top:355.300px;font-size:10.300px;line-height:13px;font-weight:bold;color:#111;white-space:nowrap">Grid</div>
<div style="left:359px;top:391.7px;width:537.5px;height:322px;border:1px solid #b3b3b3;border-radius:1.5px;"></div>
<div style="left:569.85px;top:387.4px;width:115.5px;height:8.6px;border-radius:4.3px;background:#5b5b6d;color:#fff;font-size:7px;line-height:9px;font-weight:bold;text-align:center;white-space:nowrap;">Grid</div>
<div style="left:365.5px;top:402.5px;width:98.700px;height:87.500px;background:#f0f0f0;border:1px dotted #e9e9e9"></div>
<div style="left:372px;top:413.1px;width:86px;height:73px;border:1px solid #a9a9a9;border-radius:1.5px;"></div>
<div style="left:374px;top:418.9px;width:81.5px;height:64.7px;background:#cbcbcb"></div>
<div style="left:389.3px;top:434.9px;width:51.5px;height:34.2px;border:1px solid #b9b9b9;background:#cdcdcd"></div>
<div style="left:403.7px;top:434.9px;width:51.5px;height:34.2px;font-size:31px;line-height:35.6px;text-align:center;color:#000">1</div>
<div style="left:400.3px;top:408.5px;width:29.4px;height:9px;border-radius:4.5px;background:#5b5b6d;color:#fff;font-size:7px;line-height:9.4px;font-weight:bold;text-align:center;white-space:nowrap;">HTML</div>
<div style="left:395.6px;top:397.9px;width:38.6px;height:9px;border-radius:4.5px;background:#5b5b6d;color:#fff;font-size:7px;line-height:9.4px;font-weight:bold;text-align:center;white-space:nowrap;">Grid Cell</div>
<div style="left:471.75px;top:402.5px;width:98.700px;height:87.500px;background:#f0f0f0;border:1px dotted #e9e9e9"></div>
<div style="left:478.25px;top:413.1px;width:86px;height:73px;border:1px solid #a9a9a9;border-radius:1.5px;"></div>
<div style="left:480.25px;top:418.9px;width:81.5px;height:64.7px;background:#cbcbcb"></div>
<div style="left:495.55px;top:434.9px;width:51.5px;height:34.2px;border:1px solid #b9b9b9;background:#cdcdcd"></div>
<div style="left:509.95px;top:434.9px;width:51.5px;height:34.2px;font-size:31px;line-height:35.6px;text-align:center;color:#000">2</div>
<div style="left:506.55px;top:408.5px;width:29.4px;height:9px;border-radius:4.5px;background:#5b5b6d;color:#fff;font-size:7px;line-height:9.4px;font-weight:bold;text-align:center;white-space:nowrap;">HTML</div>
<div style="left:501.85px;top:397.9px;width:38.6px;height:9px;border-radius:4.5px;background:#5b5b6d;color:#fff;font-size:7px;line-height:9.4px;font-weight:bold;text-align:center;white-space:nowrap;">Grid Cell</div>
<div style="left:578px;top:402.5px;width:98.700px;height:87.500px;background:#f0f0f0;border:1px dotted #e9e9e9"></div>
<div style="left:584.5px;top:413.1px;width:86px;height:73px;border:1px solid #a9a9a9;border-radius:1.5px;"></div>
<div style="left:586.5px;top:418.9px;width:81.5px;height:64.7px;background:#cbcbcb"></div>
<div style="left:601.8px;top:434.9px;width:51.5px;height:34.2px;border:1px solid #b9b9b9;background:#cdcdcd"></div>
<div style="left:616.2px;top:434.9px;width:51.5px;height:34.2px;font-size:31px;line-height:35.6px;text-align:center;color:#000">3</div>
<div style="left:612.8px;top:408.5px;width:29.4px;height:9px;border-radius:4.5px;background:#5b5b6d;color:#fff;font-size:7px;line-height:9.4px;font-weight:bold;text-align:center;white-space:nowrap;">HTML</div>
<div style="left:608.1px;top:397.9px;width:38.6px;height:9px;border-radius:4.5px;background:#5b5b6d;color:#fff;font-size:7px;line-height:9.4px;font-weight:bold;text-align:center;white-space:nowrap;">Grid Cell</div>
<div style="left:684.25px;top:402.5px;width:98.700px;height:87.500px;background:#f0f0f0;border:1px dotted #e9e9e9"></div>
<div style="left:690.75px;top:413.1px;width:86px;height:73px;border:1px solid #a9a9a9;border-radius:1.5px;"></div>
<div style="left:692.75px;top:418.9px;width:81.5px;height:64.7px;background:#cbcbcb"></div>
<div style="left:708.05px;top:434.9px;width:51.5px;height:34.2px;border:1px solid #b9b9b9;background:#cdcdcd"></div>
<div style="left:722.45px;top:434.9px;width:51.5px;height:34.2px;font-size:31px;line-height:35.6px;text-align:center;color:#000">4</div>
<div style="left:719.05px;top:408.5px;width:29.4px;height:9px;border-radius:4.5px;background:#5b5b6d;color:#fff;font-size:7px;line-height:9.4px;font-weight:bold;text-align:center;white-space:nowrap;">HTML</div>
<div style="left:714.35px;top:397.9px;width:38.6px;height:9px;border-radius:4.5px;background:#5b5b6d;color:#fff;font-size:7px;line-height:9.4px;font-weight:bold;text-align:center;white-space:nowrap;">Grid Cell</div>
<div style="left:790.5px;top:402.5px;width:98.700px;height:87.500px;background:#f0f0f0;border:1px dotted #e9e9e9"></div>
<div style="left:797px;top:413.1px;width:86px;height:73px;border:1px solid #a9a9a9;border-radius:1.5px;"></div>
<div style="left:799px;top:418.9px;width:81.5px;height:64.7px;background:#cbcbcb"></div>
<div style="left:814.3px;top:434.9px;width:51.5px;height:34.2px;border:1px solid #b9b9b9;background:#cdcdcd"></div>
<div style="left:828.7px;top:434.9px;width:51.5px;height:34.2px;font-size:31px;line-height:35.6px;text-align:center;color:#000">1</div>
<div style="left:825.3px;top:408.5px;width:29.4px;height:9px;border-radius:4.5px;background:#5b5b6d;color:#fff;font-size:7px;line-height:9.4px;font-weight:bold;text-align:center;white-space:nowrap;">HTML</div>
<div style="left:820.6px;top:397.9px;width:38.6px;height:9px;border-radius:4.5px;background:#5b5b6d;color:#fff;font-size:7px;line-height:9.4px;font-weight:bold;text-align:center;white-space:nowrap;">Grid Cell</div>
<div style="left:365.5px;top:496.8px;width:98.700px;height:87.500px;background:#f0f0f0;border:1px dotted #e9e9e9"></div>
<div style="left:372px;top:507.4px;width:86px;height:73px;border:1px solid #a9a9a9;border-radius:1.5px;"></div>
<div style="left:374px;top:513.2px;width:81.5px;height:64.7px;background:#cbcbcb"></div>
<div style="left:389.3px;top:529.2px;width:51.5px;height:34.2px;border:1px solid #b9b9b9;background:#cdcdcd"></div>
<div style="left:403.7px;top:529.2px;width:51.5px;height:34.2px;font-size:31px;line-height:35.6px;text-align:center;color:#000">2</div>
<div style="left:400.3px;top:502.8px;width:29.4px;height:9px;border-radius:4.5px;background:#5b5b6d;color:#fff;font-size:7px;line-height:9.4px;font-weight:bold;text-align:center;white-space:nowrap;">HTML</div>
<div style="left:395.6px;top:492.2px;width:38.6px;height:9px;border-radius:4.5px;background:#5b5b6d;color:#fff;font-size:7px;line-height:9.4px;font-weight:bold;text-align:center;white-space:nowrap;">Grid Cell</div>
<div style="left:471.75px;top:496.8px;width:98.700px;height:87.500px;background:#f0f0f0;border:1px dotted #e9e9e9"></div>
<div style="left:478.25px;top:507.4px;width:86px;height:73px;border:1px solid #a9a9a9;border-radius:1.5px;"></div>
<div style="left:480.25px;top:513.2px;width:81.5px;height:64.7px;background:#cbcbcb"></div>
<div style="left:495.55px;top:529.2px;width:51.5px;height:34.2px;border:1px solid #b9b9b9;background:#cdcdcd"></div>
<div style="left:509.95px;top:529.2px;width:51.5px;height:34.2px;font-size:31px;line-height:35.6px;text-align:center;color:#000">3</div>
<div style="left:506.55px;top:502.8px;width:29.4px;height:9px;border-radius:4.5px;background:#5b5b6d;color:#fff;font-size:7px;line-height:9.4px;font-weight:bold;text-align:center;white-space:nowrap;">HTML</div>
<div style="left:501.85px;top:492.2px;width:38.6px;height:9px;border-radius:4.5px;background:#5b5b6d;color:#fff;font-size:7px;line-height:9.4px;font-weight:bold;text-align:center;white-space:nowrap;">Grid Cell</div>
<div style="left:578px;top:496.8px;width:98.700px;height:87.500px;background:#f0f0f0;border:1px dotted #e9e9e9"></div>
<div style="left:584.5px;top:507.4px;width:86px;height:73px;border:1px solid #a9a9a9;border-radius:1.5px;"></div>
<div style="left:586.5px;top:513.2px;width:81.5px;height:64.7px;background:#cbcbcb"></div>
<div style="left:601.8px;top:529.2px;width:51.5px;height:34.2px;border:1px solid #b9b9b9;background:#cdcdcd"></div>
<div style="left:616.2px;top:529.2px;width:51.5px;height:34.2px;font-size:31px;line-height:35.6px;text-align:center;color:#000">4</div>
<div style="left:612.8px;top:502.8px;width:29.4px;height:9px;border-radius:4.5px;background:#5b5b6d;color:#fff;font-size:7px;line-height:9.4px;font-weight:bold;text-align:center;white-space:nowrap;">HTML</div>
<div style="left:608.1px;top:492.2px;width:38.6px;height:9px;border-radius:4.5px;background:#5b5b6d;color:#fff;font-size:7px;line-height:9.4px;font-weight:bold;text-align:center;white-space:nowrap;">Grid Cell</div>
<div style="left:684.25px;top:496.8px;width:98.700px;height:87.500px;background:#f0f0f0;border:1px dotted #e9e9e9"></div>
<div style="left:690.75px;top:507.4px;width:86px;height:73px;border:1px solid #a9a9a9;border-radius:1.5px;"></div>
<div style="left:692.75px;top:513.2px;width:81.5px;height:64.7px;background:#cbcbcb"></div>
<div style="left:708.05px;top:529.2px;width:51.5px;height:34.2px;border:1px solid #b9b9b9;background:#cdcdcd"></div>
<div style="left:722.45px;top:529.2px;width:51.5px;height:34.2px;font-size:31px;line-height:35.6px;text-align:center;color:#000">1</div>
<div style="left:719.05px;top:502.8px;width:29.4px;height:9px;border-radius:4.5px;background:#5b5b6d;color:#fff;font-size:7px;line-height:9.4px;font-weight:bold;text-align:center;white-space:nowrap;">HTML</div>
<div style="left:714.35px;top:492.2px;width:38.6px;height:9px;border-radius:4.5px;background:#5b5b6d;color:#fff;font-size:7px;line-height:9.4px;font-weight:bold;text-align:center;white-space:nowrap;">Grid Cell</div>
<div style="left:790.5px;top:496.8px;width:98.700px;height:87.500px;background:#f0f0f0;border:1px dotted #e9e9e9"></div>
<div style="left:797px;top:507.4px;width:86px;height:73px;border:1px solid #a9a9a9;border-radius:1.5px;"></div>
<div style="left:799px;top:513.2px;width:81.5px;height:64.7px;background:#cbcbcb"></div>
<div style="left:814.3px;top:529.2px;width:51.5px;height:34.2px;border:1px solid #b9b9b9;background:#cdcdcd"></div>
<div style="left:828.7px;top:529.2px;width:51.5px;height:34.2px;font-size:31px;line-height:35.6px;text-align:center;color:#000">2</div>
<div style="left:825.3px;top:502.8px;width:29.4px;height:9px;border-radius:4.5px;background:#5b5b6d;color:#fff;font-size:7px;line-height:9.4px;font-weight:bold;text-align:center;white-space:nowrap;">HTML</div>
<div style="left:820.6px;top:492.2px;width:38.6px;height:9px;border-radius:4.5px;background:#5b5b6d;color:#fff;font-size:7px;line-height:9.4px;font-weight:bold;text-align:center;white-space:nowrap;">Grid Cell</div>
<div style="left:365.5px;top:591.1px;width:98.700px;height:87.500px;background:#f0f0f0;border:1px dotted #e9e9e9"></div>
<div style="left:372px;top:601.7px;width:86px;height:73px;border:1px solid #a9a9a9;border-radius:1.5px;"></div>
<div style="left:374px;top:607.5px;width:81.5px;height:64.7px;background:#cbcbcb"></div>
<div style="left:389.3px;top:623.5px;width:51.5px;height:34.2px;border:1px solid #b9b9b9;background:#cdcdcd"></div>
<div style="left:403.7px;top:623.5px;width:51.5px;height:34.2px;font-size:31px;line-height:35.6px;text-align:center;color:#000">3</div>
<div style="left:400.3px;top:597.1px;width:29.4px;height:9px;border-radius:4.5px;background:#5b5b6d;color:#fff;font-size:7px;line-height:9.4px;font-weight:bold;text-align:center;white-space:nowrap;">HTML</div>
<div style="left:395.6px;top:586.5px;width:38.6px;height:9px;border-radius:4.5px;background:#5b5b6d;color:#fff;font-size:7px;line-height:9.4px;font-weight:bold;text-align:center;white-space:nowrap;">Grid Cell</div>
<div style="left:471.75px;top:591.1px;width:98.700px;height:87.500px;background:#f0f0f0;border:1px dotted #e9e9e9"></div>
<div style="left:478.25px;top:601.7px;width:86px;height:73px;border:1px solid #a9a9a9;border-radius:1.5px;"></div>
<div style="left:480.25px;top:607.5px;width:81.5px;height:64.7px;background:#cbcbcb"></div>
<div style="left:495.55px;top:623.5px;width:51.5px;height:34.2px;border:1px solid #b9b9b9;background:#cdcdcd"></div>
<div style="left:509.95px;top:623.5px;width:51.5px;height:34.2px;font-size:31px;line-height:35.6px;text-align:center;color:#000">4</div>
<div style="left:506.55px;top:597.1px;width:29.4px;height:9px;border-radius:4.5px;background:#5b5b6d;color:#fff;font-size:7px;line-height:9.4px;font-weight:bold;text-align:center;white-space:nowrap;">HTML</div>
<div style="left:501.85px;top:586.5px;width:38.6px;height:9px;border-radius:4.5px;background:#5b5b6d;color:#fff;font-size:7px;line-height:9.4px;font-weight:bold;text-align:center;white-space:nowrap;">Grid Cell</div>
<svg style="left:618.300px;top:686.300px" width="18" height="18" viewBox="0 0 18 18"><circle cx="9" cy="9" r="8.600" fill="#2a7ff0"/><path d="M9 5.800v6.400M5.800 9h6.400" stroke="#fff" stroke-width=".8"/></svg>
<div style="left:359px;top:721.6px;width:537.5px;height:40px;border:1px solid #b3b3b3;border-radius:1.5px;"></div>
<div style="left:569.85px;top:717.2px;width:115.5px;height:8.6px;border-radius:4.3px;background:#5b5b6d;color:#fff;font-size:7px;line-height:9px;font-weight:bold;text-align:center;white-space:nowrap;">Header</div>
<div style="left:344px;top:125px;width:568px;height:17.300px;background:#ebebed"></div>
<div style="left:354.5px;top:126.700px;width:19.5px;height:13.200px;border-radius:3px;background:#f8f8f8"></div>
<svg style="left:358.800px;top:127.800px" width="10.500" height="10.200" viewBox="0 0 11 11"><path d="M5.500.9l4.600 2v5.200L5.500 10.300 1 8.100V2.900z" fill="#fff" stroke="#111" stroke-width="1" stroke-linejoin="round"/><path d="M1 2.900l4.500 2v5.400L1 8.100z" fill="#111"/><path d="M5.500 4.900l4.600-2" stroke="#111" stroke-width=".9"/></svg>
<div style="left:395px;top:126.700px;width:21.3px;height:13.200px;border-radius:3px;background:#8fd98b"></div>
<svg style="left:398.500px;top:127.300px" width="14" height="12" viewBox="0 0 14 12"><g fill="#111" stroke="#8fd98b" stroke-width=".7" stroke-linejoin="round"><path d="M7 .6l3.200 1.400v3.200L7 6.600 3.800 5.200V2z"/><path d="M3.800 4.800L7 6.200v3.400L3.800 11 .6 9.600V6.200z"/><path d="M10.200 4.800l3.200 1.400v3.400L10.200 11 7 9.600V6.200z"/></g><g fill="none" stroke="#8fd98b" stroke-width=".6"><path d="M3.800 2L7 3.300 10.200 2M7 3.300v3"/><path d="M.6 6.200l3.200 1.300L7 6.200M3.800 7.500v3.300"/><path d="M7 6.200l3.200 1.300 3.200-1.300M10.200 7.500v3.300"/></g></svg>
<div style="left:425px;top:126.700px;width:21.3px;height:13.200px;border-radius:3px;background:#fbbe7c"></div>
<svg style="left:430.500px;top:128px" width="11" height="11" viewBox="0 0 20 19"><path d="M.8 5.800h4.400c-.7-.8-1-1.500-1-2.300C4.200 2 5.400.8 7 .8s2.800 1.200 2.800 2.700c0 .8-.3 1.500-1 2.300h4.600v4.400c.8-.7 1.500-1 2.300-1 1.500 0 2.700 1.200 2.700 2.800s-1.200 2.800-2.700 2.800c-.8 0-1.500-.3-2.300-1v4.500H9c.6-.7.900-1.400.9-2.100 0-1.400-1.200-2.600-2.800-2.600s-2.800 1.200-2.800 2.600c0 .7.300 1.400.9 2.100H.8z" fill="#111"/></svg>
<div style="left:455.3px;top:126.700px;width:21.2px;height:13.200px;border-radius:3px;background:#f9b6b6"></div>
<svg style="left:461px;top:128.500px" width="10" height="9" viewBox="0 0 10 9"><g fill="#111"><rect x=".2" y=".4" width="4.300" height="3.600" rx=".5"/><rect x="5.500" y=".4" width="4.300" height="3.600" rx=".5"/><rect x=".2" y="5" width="4.300" height="3.600" rx=".5"/><rect x="5.500" y="5" width="4.300" height="3.600" rx=".5"/></g></svg>
<div style="left:700.5px;top:126.700px;width:20px;height:13.200px;border-radius:3px;background:#f8f8f8"></div>
<svg style="left:705.500px;top:129px" width="9.500" height="7.500" viewBox="0 0 10 8"><path d="M.8.800l3 2.700-3 2.700" fill="none" stroke="#222" stroke-width="1"/><path d="M4.800 6.800h4.400" stroke="#222" stroke-width="1"/></svg>
<div style="left:803px;top:126.700px;width:20px;height:13.200px;border-radius:3px;background:#f8f8f8"></div>
<svg style="left:807.500px;top:128.700px" width="11" height="8.300" viewBox="0 0 12 9"><path d="M.4 4.500C1.900 2 3.800.9 6 .9s4.100 1.100 5.600 3.600C10.100 7 8.200 8.100 6 8.100S1.900 7 .4 4.500z" fill="#111"/><circle cx="6" cy="4.500" r="2.600" fill="#f8f8f8"/><circle cx="6" cy="4.500" r="1.700" fill="#111"/></svg>
<div style="left:833px;top:126.700px;width:20px;height:13.200px;border-radius:3px;background:#f8f8f8"></div>
<svg style="left:839px;top:127.800px" width="8.200" height="10" viewBox="0 0 9 11"><rect x=".6" y="4.600" width="7.800" height="5.600" rx=".8" fill="#111"/><path d="M2.400 4.800V3.200a2.100 2.100 0 0 1 4.200 0v1.600" fill="none" stroke="#111" stroke-width="1.200"/></svg>
<div style="left:875px;top:126.700px;width:20px;height:13.200px;border-radius:3px;background:#f8f8f8"></div>
<svg style="left:880.500px;top:128.300px" width="9.200" height="9.200" viewBox="0 0 10 10"><g stroke="#111" stroke-width="1"><path d="M.3 1.800h9.400M.3 5h9.400M.3 8.200h9.400"/></g><g fill="#111"><rect x="5.600" y=".4" width="1.800" height="2.800"/><rect x="2.200" y="3.600" width="1.800" height="2.800"/><rect x="5.600" y="6.800" width="1.800" height="2.800"/></g></svg>
<!-- inspector -->
<div style="left:912.5px;top:125px;width:206.5px;height:603px;background:#323232"></div>
<div style="left:912px;top:125px;width:1px;height:603px;background:#1a1a1a"></div>
<div style="left:912.5px;top:125px;width:206.5px;height:17.300px;background:#343336"></div>
<div style="left:912.5px;top:142px;width:206.5px;height:.8px;background:#49484c"></div>
<div style="left:1074.400px;top:125px;width:32px;height:17.300px;background:linear-gradient(#2487ff,#117af8)"></div>
<svg style="left:923.7px;top:127.600px" width="10" height="11" viewBox="0 0 11 11" preserveAspectRatio="none"><g fill="none" stroke="#c9c8cc" stroke-width=".95"><rect x=".6" y=".6" width="9.800" height="9.800" rx=".8"/><path d="M.6 3.400h9.800M4 3.400v7"/></g></svg>
<svg style="left:956px;top:127.600px" width="10" height="11" viewBox="0 0 11 11" preserveAspectRatio="none"><g fill="none" stroke="#c9c8cc" stroke-width=".95"><rect x=".6" y=".6" width="9.800" height="9.800" rx=".8"/><path d="M3.400 .6v9.800M3.400 3.600h7"/><path d="M1.400 2.200h1.200M1.400 3.600h1.200" stroke-width=".6"/></g></svg>
<svg style="left:988.7px;top:127.600px" width="10" height="11" viewBox="0 0 11 11" preserveAspectRatio="none"><g fill="none" stroke="#c9c8cc" stroke-width=".95"><rect x=".6" y=".6" width="9.800" height="9.800" rx=".8"/><path d="M.6 3.400h9.800M4 3.400v7M7.200 3.400v0"/></g></svg>
<svg style="left:1020px;top:127px" width="11.500" height="11.500" viewBox="0 0 12 12"><g fill="none" stroke="#c9c8cc" stroke-width=".9" stroke-linejoin="round"><path d="M6.400 1.300l4.300-.3.300 4.300-5.400 5.400-4.300-4.300z" transform="rotate(8 6 6)"/><circle cx="8.600" cy="3.300" r=".7"/><path d="M4 6.500l2 2M5.300 5.200l2 2" stroke-width=".7"/></g></svg>
<svg style="left:1052.500px;top:127px" width="11.500" height="11.500" viewBox="0 0 12 12"><g fill="none" stroke="#c9c8cc" stroke-width=".9"><circle cx="5.600" cy="5.800" r="5"/><circle cx="5.600" cy="5.800" r="3"/><circle cx="5.600" cy="5.800" r="1.300" fill="#c9c8cc"/><path d="M9.400 9.200l1.800 1.800"/></g></svg>
<svg style="left:1085.500px;top:128px" width="10" height="10" viewBox="0 0 12 12"><g fill="none" stroke="#e8f2ff" stroke-width="1.100"><path d="M3.300 1.300h5.400L11.400 6 8.700 10.700H3.300L.6 6z"/><circle cx="6" cy="6" r="1.700"/></g></svg>
<svg style="left:1109px;top:128.800px" width="9.500" height="8.600" viewBox="0 0 11 10"><g fill="none" stroke="#7a797d" stroke-width="1"><rect x="4.600" y=".6" width="3.200" height="5.200"/><path d="M4.600 3.600H.6v5.600h6V5.800"/></g></svg>
<div style="left:912.5px;top:142.800px;width:206.5px;height:28px;background:#3a3740"></div>
<div style="left:925px;top:151.500px;font-size:7.700px;line-height:10px;font-weight:bold;color:#f2f2f2;white-space:nowrap">Stacks</div>
<div style="left:912.5px;top:170.800px;width:206.5px;height:36px;background:#1f1f1f"></div>
<svg style="left:925px;top:182px" width="12" height="12" viewBox="0 0 12 12"><path d="M6 .7l5 2.100v6.400L6 11.400 1 9.200V2.800z" fill="#f0f0f0" stroke="#f0f0f0" stroke-width=".9" stroke-linejoin="round"/><path d="M6.300 5.600v5.200l4.100-1.900V3.900z" fill="#1e1e1e"/><path d="M2.200 3.100L6 4.800l3.800-1.700L6 1.600z" fill="#1e1e1e"/></svg>
<div style="left:943px;top:180.500px;font-size:12.400px;line-height:15px;color:#ededed;white-space:nowrap">4 Columns</div>
<div style="left:912.5px;top:206.6px;width:206.5px;height:13.6px;background:#212121"></div>
<svg style="left:916.500px;top:211.4px" width="6.400" height="4.600" viewBox="0 0 7 5"><path d="M.8.900l2.700 2.800L6.200.9" fill="none" stroke="#a4a4a4" stroke-width=".9"/></svg>
<div style="left:925px;top:209.5px;font-size:8px;line-height:10px;color:#a9a9a9;white-space:nowrap">Notes</div>
<div style="left:912.5px;top:227px;width:66.5px;font-size:7.300px;line-height:9px;color:#e4e4e4;text-align:right;white-space:nowrap">Title:</div>
<div style="left:984.500px;top:226.600px;width:121.500px;height:9.800px;background:#3b3b3b;border-top:.6px solid #333;border-bottom:.7px solid #555"></div>
<div style="left:912.5px;top:246.2px;width:206.5px;height:14.6px;background:#212121"></div>
<svg style="left:916.500px;top:251.5px" width="6.400" height="4.600" viewBox="0 0 7 5"><path d="M.8.900l2.700 2.800L6.200.9" fill="none" stroke="#a4a4a4" stroke-width=".9"/></svg>
<div style="left:925px;top:249.6px;font-size:8px;line-height:10px;color:#a9a9a9;white-space:nowrap">Sizing - Setup</div>
<div style="left:912.5px;top:269px;width:66.5px;font-size:7.300px;line-height:9px;color:#e4e4e4;text-align:right;white-space:nowrap">Size Devices:</div>
<div style="left:984.5px;top:267.4px;width:20.500px;height:12.4px;border-radius:3px;background:#6a6a6a"></div>
<svg style="left:984.5px;top:267.4px" width="20.500" height="12.4" viewBox="0 0 20.500 12.400"><rect x="8.300" y="2.500" width="4" height="7.400" rx="1" fill="none" stroke="#f2f2f2" stroke-width="1"/><rect x="9.400" y="3.900" width="1.800" height="3.800" fill="#f2f2f2" opacity=".6"/></svg>
<div style="left:1018.3px;top:267.4px;width:20.500px;height:12.4px;border-radius:3px;background:#1a66e0"></div>
<svg style="left:1018.3px;top:267.4px" width="20.500" height="12.4" viewBox="0 0 20.500 12.400"><rect x="7.200" y="2.300" width="6.200" height="7.800" rx="1" fill="none" stroke="#f2f2f2" stroke-width="1.100"/></svg>
<div style="left:1052.2px;top:267.4px;width:20.500px;height:12.4px;border-radius:3px;background:#6a6a6a"></div>
<svg style="left:1052.2px;top:267.4px" width="20.500" height="12.4" viewBox="0 0 20.500 12.400"><rect x="5" y="1.800" width="10.500" height="6.600" rx=".8" fill="#f2f2f2"/><rect x="6" y="2.700" width="8.500" height="3.700" fill="#6a6a6a" opacity=".35"/><path d="M8 10.400h4.600l-.8-2h-3z" fill="#f2f2f2"/></svg>
<div style="left:994.7px;top:282px;font-size:6.200px;line-height:8px;color:#a2a2a2;white-space:nowrap;transform:translateX(-50%)">Small</div>
<div style="left:1028.5px;top:282px;font-size:6.200px;line-height:8px;color:#a2a2a2;white-space:nowrap;transform:translateX(-50%)">Medium</div>
<div style="left:1062.4px;top:282px;font-size:6.200px;line-height:8px;color:#a2a2a2;white-space:nowrap;transform:translateX(-50%)">Large</div>
<div style="left:912.5px;top:300.4px;width:206.5px;height:14.4px;background:#212121"></div>
<svg style="left:916.500px;top:305.6px" width="6.400" height="4.600" viewBox="0 0 7 5"><path d="M.8.900l2.700 2.800L6.200.9" fill="none" stroke="#a4a4a4" stroke-width=".9"/></svg>
<div style="left:925px;top:303.7px;font-size:8px;line-height:10px;color:#a9a9a9;white-space:nowrap">Sizing - Medium and Up</div>
<div style="left:912.5px;top:321.5px;width:66.5px;font-size:7.300px;line-height:9px;color:#e4e4e4;text-align:right;white-space:nowrap">Column 1:</div>
<div style="left:984.500px;top:321px;width:122px;height:9.800px;border-radius:2.500px;background:#676767"></div>
<div style="left:1097.300px;top:321px;width:9.200px;height:9.800px;border-radius:0 2.500px 2.500px 0;background:#2a6fe0"></div>
<svg style="left:1097.300px;top:321px" width="9.200" height="9.800" viewBox="0 0 9.200 9.800"><path d="M3 4l1.600-1.700L6.200 4M3 5.800l1.600 1.700 1.600-1.700" fill="none" stroke="#fff" stroke-width=".9"/></svg>
<div style="left:988.500px;top:321.5px;font-size:7.400px;line-height:9px;color:#f4f4f4;white-space:nowrap">3 <span style="position:static;letter-spacing:.6px">---</span> 25%</div>
<div style="left:912.5px;top:343.55px;width:66.5px;font-size:7.300px;line-height:9px;color:#e4e4e4;text-align:right;white-space:nowrap">Column 2:</div>
<div style="left:984.500px;top:343.05px;width:122px;height:9.800px;border-radius:2.500px;background:#676767"></div>
<div style="left:1097.300px;top:343.05px;width:9.200px;height:9.800px;border-radius:0 2.500px 2.500px 0;background:#2a6fe0"></div>
<svg style="left:1097.300px;top:343.05px" width="9.200" height="9.800" viewBox="0 0 9.200 9.800"><path d="M3 4l1.600-1.700L6.200 4M3 5.800l1.600 1.700 1.600-1.700" fill="none" stroke="#fff" stroke-width=".9"/></svg>
<div style="left:988.500px;top:343.55px;font-size:7.400px;line-height:9px;color:#f4f4f4;white-space:nowrap">3 <span style="position:static;letter-spacing:.6px">---</span> 25%</div>
<div style="left:912.5px;top:365.6px;width:66.5px;font-size:7.300px;line-height:9px;color:#e4e4e4;text-align:right;white-space:nowrap">Column 3:</div>
<div style="left:984.500px;top:365.1px;width:122px;height:9.800px;border-radius:2.500px;background:#676767"></div>
<div style="left:1097.300px;top:365.1px;width:9.200px;height:9.800px;border-radius:0 2.500px 2.500px 0;background:#2a6fe0"></div>
<svg style="left:1097.300px;top:365.1px" width="9.200" height="9.800" viewBox="0 0 9.200 9.800"><path d="M3 4l1.600-1.700L6.200 4M3 5.800l1.600 1.700 1.600-1.700" fill="none" stroke="#fff" stroke-width=".9"/></svg>
<div style="left:988.500px;top:365.6px;font-size:7.400px;line-height:9px;color:#f4f4f4;white-space:nowrap">4 <span style="position:static;letter-spacing:.6px">----</span> 33%</div>
<div style="left:912.5px;top:387.65px;width:66.5px;font-size:7.300px;line-height:9px;color:#e4e4e4;text-align:right;white-space:nowrap">Column 4:</div>
<div style="left:984.500px;top:387.15px;width:122px;height:9.800px;border-radius:2.500px;background:#676767"></div>
<div style="left:1097.300px;top:387.15px;width:9.200px;height:9.800px;border-radius:0 2.500px 2.500px 0;background:#2a6fe0"></div>
<svg style="left:1097.300px;top:387.15px" width="9.200" height="9.800" viewBox="0 0 9.200 9.800"><path d="M3 4l1.600-1.700L6.200 4M3 5.800l1.600 1.700 1.600-1.700" fill="none" stroke="#fff" stroke-width=".9"/></svg>
<div style="left:988.500px;top:387.65px;font-size:7.400px;line-height:9px;color:#f4f4f4;white-space:nowrap">2 <span style="position:static;letter-spacing:.6px">--</span> 17%</div>
<div style="left:912.5px;top:408.8px;width:206.5px;height:14.6px;background:#212121"></div>
<svg style="left:916.500px;top:414.1px" width="6.400" height="4.600" viewBox="0 0 7 5"><path d="M.8.900l2.700 2.800L6.200.9" fill="none" stroke="#a4a4a4" stroke-width=".9"/></svg>
<div style="left:925px;top:412.2px;font-size:8px;line-height:10px;color:#a9a9a9;white-space:nowrap">Spacing</div>
<div style="left:912.5px;top:431.3px;width:66.5px;font-size:7.300px;line-height:9px;color:#e4e4e4;text-align:right;white-space:nowrap">Padding:</div>
<div style="left:984.5px;top:429.6px;width:20.500px;height:12.4px;border-radius:3px;background:#1a66e0"></div>
<svg style="left:984.5px;top:429.6px" width="20.500" height="12.4" viewBox="0 0 20.500 12.400"><circle cx="10.250" cy="6.200" r="3.700" fill="none" stroke="#f2f2f2" stroke-width="1.200"/><path d="M7.700 8.700l5.100-5" stroke="#f2f2f2" stroke-width="1.200"/></svg>
<div style="left:1018.3px;top:429.6px;width:20.500px;height:12.4px;border-radius:3px;background:#6a6a6a"></div>
<svg style="left:1018.3px;top:429.6px" width="20.500" height="12.4" viewBox="0 0 20.500 12.400"><path d="M10.250 1.700l4.300 1.800v5.200l-4.300 2-4.300-2V3.500z" fill="#f2f2f2"/><path d="M10.600 6v4.200l3.300-1.500V4.500z" fill="#6a6a6a"/><path d="M7 3.900l3.250 1.400 3.250-1.400-3.250-1.300z" fill="#6a6a6a"/></svg>
<div style="left:1052.2px;top:429.6px;width:20.500px;height:12.4px;border-radius:3px;background:#6a6a6a"></div>
<svg style="left:1052.2px;top:429.6px" width="20.500" height="12.4" viewBox="0 0 20.500 12.400"><g transform="translate(10.250 6.200)"><g fill="#f2f2f2"><rect x="-1.100" y="-4.600" width="2.200" height="9.200" rx=".5" transform="rotate(0)"/><rect x="-1.100" y="-4.600" width="2.200" height="9.200" rx=".5" transform="rotate(45)"/><rect x="-1.100" y="-4.600" width="2.200" height="9.200" rx=".5" transform="rotate(90)"/><rect x="-1.100" y="-4.600" width="2.200" height="9.200" rx=".5" transform="rotate(135)"/><circle r="3.300"/></g><circle r="1.500" fill="#6a6a6a"/></g></svg>
<div style="left:994.7px;top:444.8px;font-size:6.200px;line-height:8px;color:#a2a2a2;white-space:nowrap;transform:translateX(-50%)">None</div>
<div style="left:1028.5px;top:444.8px;font-size:6.200px;line-height:8px;color:#a2a2a2;white-space:nowrap;transform:translateX(-50%)">Default</div>
<div style="left:1062.4px;top:444.8px;font-size:6.200px;line-height:8px;color:#a2a2a2;white-space:nowrap;transform:translateX(-50%)">Custom</div>
<div style="left:920px;top:462.300px;width:191.500px;height:.8px;background:#444"></div>
<div style="left:912.5px;top:475px;width:66.5px;font-size:7.300px;line-height:9px;color:#e4e4e4;text-align:right;white-space:nowrap">Gutters:</div>
<div style="left:984.5px;top:473.4px;width:20.500px;height:12.4px;border-radius:3px;background:#6a6a6a"></div>
<svg style="left:984.5px;top:473.4px" width="20.500" height="12.4" viewBox="0 0 20.500 12.400"><circle cx="10.250" cy="6.200" r="3.700" fill="none" stroke="#f2f2f2" stroke-width="1.200"/><path d="M7.700 8.700l5.100-5" stroke="#f2f2f2" stroke-width="1.200"/></svg>
<div style="left:1018.3px;top:473.4px;width:20.500px;height:12.4px;border-radius:3px;background:#1a66e0"></div>
<svg style="left:1018.3px;top:473.4px" width="20.500" height="12.4" viewBox="0 0 20.500 12.400"><path d="M10.250 1.700l4.300 1.800v5.200l-4.300 2-4.300-2V3.500z" fill="#f2f2f2"/><path d="M10.600 6v4.200l3.300-1.500V4.500z" fill="#1a66e0"/><path d="M7 3.900l3.250 1.400 3.250-1.400-3.250-1.300z" fill="#1a66e0"/></svg>
<div style="left:1052.2px;top:473.4px;width:20.500px;height:12.4px;border-radius:3px;background:#6a6a6a"></div>
<svg style="left:1052.2px;top:473.4px" width="20.500" height="12.4" viewBox="0 0 20.500 12.400"><g transform="translate(10.250 6.200)"><g fill="#f2f2f2"><rect x="-1.100" y="-4.600" width="2.200" height="9.200" rx=".5" transform="rotate(0)"/><rect x="-1.100" y="-4.600" width="2.200" height="9.200" rx=".5" transform="rotate(45)"/><rect x="-1.100" y="-4.600" width="2.200" height="9.200" rx=".5" transform="rotate(90)"/><rect x="-1.100" y="-4.600" width="2.200" height="9.200" rx=".5" transform="rotate(135)"/><circle r="3.300"/></g><circle r="1.500" fill="#6a6a6a"/></g></svg>
<div style="left:994.7px;top:488.4px;font-size:6.200px;line-height:8px;color:#a2a2a2;white-space:nowrap;transform:translateX(-50%)">None</div>
<div style="left:1028.5px;top:488.4px;font-size:6.200px;line-height:8px;color:#a2a2a2;white-space:nowrap;transform:translateX(-50%)">Default</div>
<div style="left:1062.4px;top:488.4px;font-size:6.200px;line-height:8px;color:#a2a2a2;white-space:nowrap;transform:translateX(-50%)">Custom</div>
<div style="left:912.5px;top:506.8px;width:206.5px;height:15px;background:#212121"></div>
<svg style="left:916.500px;top:512.3px" width="6.400" height="4.600" viewBox="0 0 7 5"><path d="M.8.900l2.700 2.800L6.200.9" fill="none" stroke="#a4a4a4" stroke-width=".9"/></svg>
<div style="left:925px;top:510.4px;font-size:8px;line-height:10px;color:#a9a9a9;white-space:nowrap">Alignment</div>
<div style="left:912.5px;top:529px;width:66.5px;font-size:7.300px;line-height:9px;color:#e4e4e4;text-align:right;white-space:nowrap">Horizontal:</div>
<div style="left:984.5px;top:527.3px;width:20.500px;height:12.4px;border-radius:3px;background:#1a66e0"></div>
<svg style="left:984.5px;top:527.3px" width="20.500" height="12.4" viewBox="0 0 20.500 12.400"><g stroke="#f2f2f2" stroke-width="1.300"><path d="M5.4 2.8H15"/><path d="M5.4 5.05H11.5"/><path d="M5.4 7.3H15"/><path d="M5.4 9.55H12.5"/></g></svg>
<div style="left:1018.3px;top:527.3px;width:20.500px;height:12.4px;border-radius:3px;background:#6a6a6a"></div>
<svg style="left:1018.3px;top:527.3px" width="20.500" height="12.4" viewBox="0 0 20.500 12.400"><g stroke="#f2f2f2" stroke-width="1.300"><path d="M7.4 2.8H13.1"/><path d="M6 5.05H14.5"/><path d="M7.4 7.3H13.1"/><path d="M5.4 9.55H15.1"/></g></svg>
<div style="left:1052.2px;top:527.3px;width:20.500px;height:12.4px;border-radius:3px;background:#6a6a6a"></div>
<svg style="left:1052.2px;top:527.3px" width="20.500" height="12.4" viewBox="0 0 20.500 12.400"><g stroke="#f2f2f2" stroke-width="1.300"><path d="M5.4 2.8H15"/><path d="M8.9 5.05H15"/><path d="M5.4 7.3H15"/><path d="M7.9 9.55H15"/></g></svg>
<div style="left:1086px;top:527.3px;width:20.500px;height:12.4px;border-radius:3px;background:#6a6a6a"></div>
<svg style="left:1086px;top:527.3px" width="20.500" height="12.4" viewBox="0 0 20.500 12.400"><g stroke="#f2f2f2" stroke-width="1.300"><path d="M5.4 2.8H15.1"/><path d="M5.4 5.05H15.1"/><path d="M5.4 7.3H15.1"/><path d="M5.4 9.55H15.1"/></g></svg>
<div style="left:994.7px;top:543.2px;font-size:6.200px;line-height:8px;color:#a2a2a2;white-space:nowrap;transform:translateX(-50%)">Left</div>
<div style="left:1028.5px;top:543.2px;font-size:6.200px;line-height:8px;color:#a2a2a2;white-space:nowrap;transform:translateX(-50%)">Center</div>
<div style="left:1062.4px;top:543.2px;font-size:6.200px;line-height:8px;color:#a2a2a2;white-space:nowrap;transform:translateX(-50%)">Right</div>
<div style="left:1096.2px;top:543.2px;font-size:6.200px;line-height:8px;color:#a2a2a2;white-space:nowrap;transform:translateX(-50%)">Justify</div>
<div style="left:912.5px;top:562.3px;width:66.5px;font-size:7.300px;line-height:9px;color:#e4e4e4;text-align:right;white-space:nowrap">Vertical:</div>
<div style="left:984.5px;top:560.6px;width:20.500px;height:12.4px;border-radius:3px;background:#1a66e0"></div>
<svg style="left:984.5px;top:560.6px" width="20.500" height="12.4" viewBox="0 0 20.500 12.400"><path d="M10.250 10V3.300M7 6.200l3.250-3.300 3.250 3.300" fill="none" stroke="#f2f2f2" stroke-width="1.700" stroke-linejoin="round"/></svg>
<div style="left:1018.3px;top:560.6px;width:20.500px;height:12.4px;border-radius:3px;background:#6a6a6a"></div>
<svg style="left:1018.3px;top:560.6px" width="20.500" height="12.4" viewBox="0 0 20.500 12.400"><rect x="6.600" y="5.100" width="7.300" height="2.100" rx=".6" fill="#f2f2f2"/></svg>
<div style="left:1052.2px;top:560.6px;width:20.500px;height:12.4px;border-radius:3px;background:#6a6a6a"></div>
<svg style="left:1052.2px;top:560.6px" width="20.500" height="12.4" viewBox="0 0 20.500 12.400"><path d="M10.250 2.400v6.700M7 6.200l3.250 3.300 3.250-3.300" fill="none" stroke="#f2f2f2" stroke-width="1.700" stroke-linejoin="round"/></svg>
<div style="left:994.7px;top:576.2px;font-size:6.200px;line-height:8px;color:#a2a2a2;white-space:nowrap;transform:translateX(-50%)">Top</div>
<div style="left:1028.5px;top:576.2px;font-size:6.200px;line-height:8px;color:#a2a2a2;white-space:nowrap;transform:translateX(-50%)">Middle</div>
<div style="left:1062.4px;top:576.2px;font-size:6.200px;line-height:8px;color:#a2a2a2;white-space:nowrap;transform:translateX(-50%)">Bottom</div>
<div style="left:912.5px;top:594px;width:206.5px;height:15px;background:#212121"></div>
<svg style="left:916.500px;top:599.5px" width="6.400" height="4.600" viewBox="0 0 7 5"><path d="M.8.900l2.700 2.800L6.200.9" fill="none" stroke="#a4a4a4" stroke-width=".9"/></svg>
<div style="left:925px;top:597.6px;font-size:8px;line-height:10px;color:#a9a9a9;white-space:nowrap">HTML</div>
<div style="left:912.5px;top:615.3px;width:66.5px;font-size:7.300px;line-height:9px;color:#e4e4e4;text-align:right;white-space:nowrap">Custom Classes:</div>
<div style="left:984.500px;top:614.200px;width:122px;height:32px;background:#1e1e1e"></div>
</div></div>
</body>
</html>
